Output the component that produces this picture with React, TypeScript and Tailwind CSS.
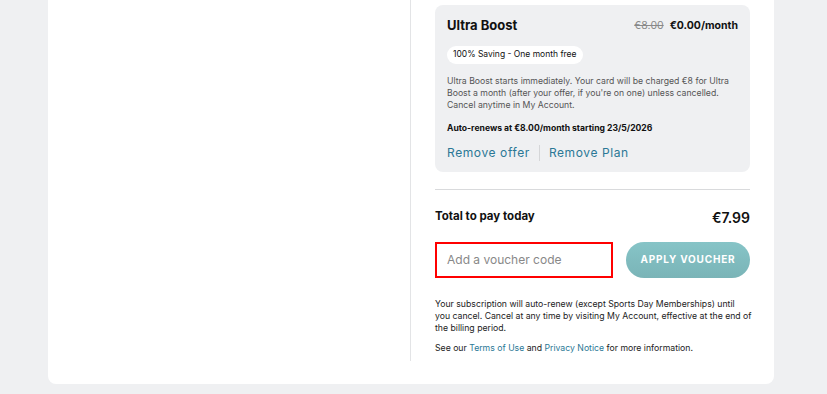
import React from "react";

export default function App() {
  return (
    <div className="h-[394px] w-[827px] overflow-hidden bg-[#eff0f2]" style={{ fontFamily: "Inter, 'Noto Sans', sans-serif" }}>
      <div className="ml-[48px] flex h-[384px] w-[726px] rounded-b-[8px] bg-white pb-[23px]">
        <div className="w-[363px] shrink-0 border-r border-[#e3e4e6]" />
        <div className="flex w-[363px] flex-col pl-[24px] pr-[24px] pt-[5px] text-[#111]">
          <div className="rounded-[8px] bg-[#eff0f2] px-[12px] pb-[10px] pt-[11px]">
            <div className="flex items-center justify-between">
              <span className="text-[13px] font-bold">Ultra Boost</span>
              <span className="text-[10.5px]">
                <span className="text-[#888] line-through">€8.00</span>
                <span className="ml-[6px] font-bold">€0.00/month</span>
              </span>
            </div>
            <div className="mt-[10px] inline-flex h-[18px] items-center rounded-full bg-white px-[6px] text-[8.5px]">
              100% Saving - One month free
            </div>
            <p className="mt-[11px] text-[8.7px] leading-[12px] text-[#555]">
              Ultra Boost starts immediately. Your card will be charged €8 for Ultra Boost a month (after your offer, if you're on one) unless cancelled. Cancel anytime in My Account.
            </p>
            <p className="mt-[11px] text-[8.6px] font-bold leading-[12px]">Auto-renews at €8.00/month starting 23/5/2026</p>
            <div className="mt-[10px] flex items-center text-[12px] tracking-[0.6px] text-[#2b7896]">
              <span>Remove offer</span>
              <span className="mx-[9px] h-[16px] w-px bg-[#d5d6d8]" />
              <span>Remove Plan</span>
            </div>
          </div>
          <div className="mt-[17px] h-px bg-[#d9dadc]" />
          <div className="mt-[17px] flex items-center justify-between">
            <span className="text-[11.5px] font-bold">Total to pay today</span>
            <span className="text-[14px] font-semibold">€7.99</span>
          </div>
          <div className="mt-[14px] flex items-center justify-between">
            <div className="flex h-[36px] w-[178px] items-center border-2 border-[#ff0000] px-[10px] text-[12px] text-[#888]">
              Add a voucher code
            </div>
            <div className="flex h-[36px] w-[124px] items-center justify-center rounded-full bg-gradient-to-b from-[#86c4c7] to-[#7ab4b7] text-[10px] font-bold tracking-[0.8px] text-white">
              APPLY VOUCHER
            </div>
          </div>
          <p className="mr-[-8px] mt-[20px] text-[8.7px] leading-[12px] text-[#222]">
            Your subscription will auto-renew (except Sports Day Memberships) until
            <br />
            you cancel. Cancel at any time by visiting My Account, effective at the end of
            <br />
            the billing period.
          </p>
          <p className="mt-[8px] text-[8.7px] leading-[12px] text-[#222]">
            See our <span className="text-[#2b7896]">Terms of Use</span> and <span className="text-[#2b7896]">Privacy Notice</span> for more information.
          </p>
        </div>
      </div>
    </div>
  );
}
